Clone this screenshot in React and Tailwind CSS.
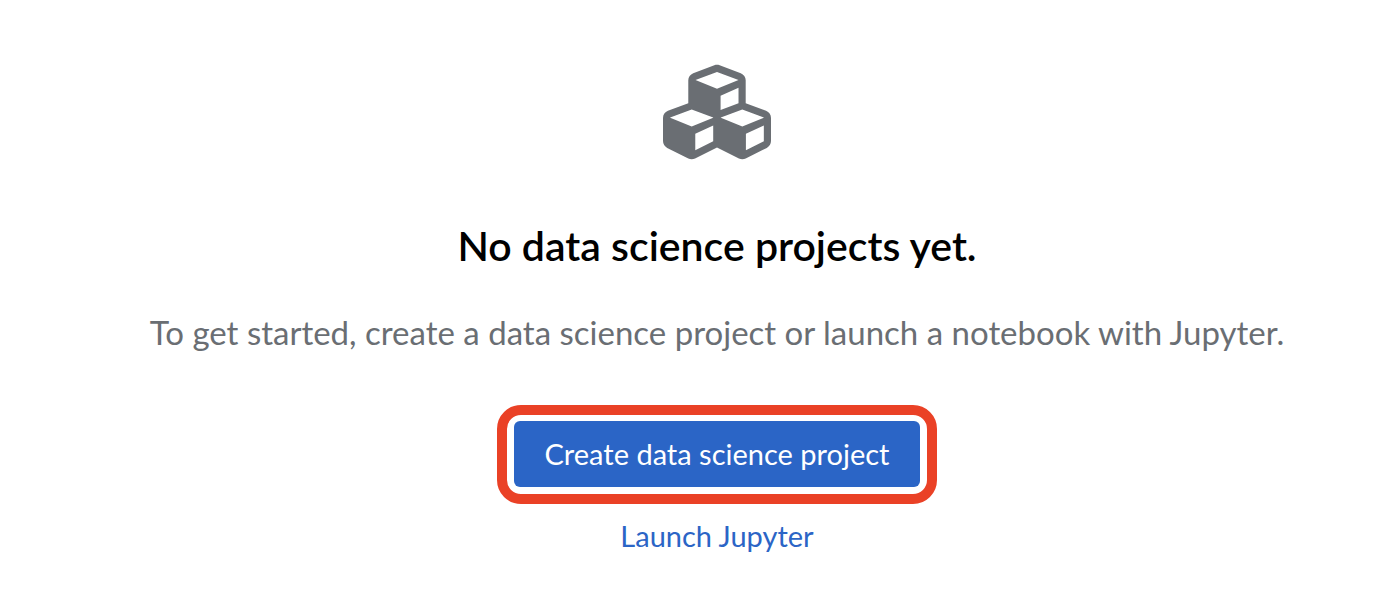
import { FaCubes } from "react-icons/fa";

export default function App() {
  return (
    <main className="flex min-h-screen flex-col items-center bg-white pt-[58px] pl-[46px] text-center font-['Lato',sans-serif]">
      <FaCubes aria-hidden="true" className="size-[108px] text-[#6a6e73]" />
      <h1 className="mt-[54px] text-[41px] leading-[52px] font-semibold text-black">No data science projects yet.</h1>
      <p className="mt-9 text-[33px] leading-[48px] whitespace-nowrap text-[#6a6e73]">
        To get started, create a data science project or launch a notebook with Jupyter.
      </p>
      <div className="mt-[49px] rounded-3xl border-10 border-[#ea4126] px-[7px] pt-[6px] pb-[7px]">
        <button type="button" className="h-[66px] rounded-md bg-[#2b65c6] px-[31px] text-[29px] text-white">
          Create data science project
        </button>
      </div>
      <a href="#jupyter" className="mt-[11px] text-[29px] leading-[42px] text-[#2b65c6]">Launch Jupyter</a>
    </main>
  );
}
